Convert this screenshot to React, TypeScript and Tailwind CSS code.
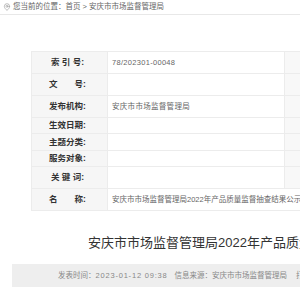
import { MapPin } from 'lucide-react';

const rows: Array<{ label: string; value: string; h: string; span?: boolean }> = [
  { label: '索 引 号:', value: '78/202301-00048', h: 'h-[22px]' },
  { label: '文　　号:', value: '', h: 'h-[22px]' },
  { label: '发布机构:', value: '安庆市市场监督管理局', h: 'h-[22px]' },
  { label: '生效日期:', value: '', h: 'h-[16px]' },
  { label: '主题分类:', value: '', h: 'h-[17px]' },
  { label: '服务对象:', value: '', h: 'h-[16px]' },
  { label: '关 键 词:', value: '', h: 'h-[22px]' },
  { label: '名　　称:', value: '安庆市市场监督管理局2022年产品质量监督抽查结果公示', h: 'h-[22px]', span: true },
];

export default function App() {
  return (
    <div className="relative h-[300px] w-[300px] overflow-hidden bg-white font-['Liberation_Sans','Noto_Sans_CJK_SC',sans-serif]">
      <div className="flex h-[15px] items-center gap-[2px] border-b border-[#e8e8e8] pl-[3px] text-[7.5px] text-[#666]">
        <MapPin className="h-[8px] w-[8px] text-[#888]" strokeWidth={1.6} />
        <span className="whitespace-nowrap">您当前的位置：首页 &gt; 安庆市市场监督管理局</span>
      </div>

      <div className="ml-[31px] mt-[36px] w-[300px] border-b border-[#ececec]">
        {rows.map((row) => (
          <div key={row.label} className={`flex border-t border-[#ececec] ${row.h}`}>
            <div className="flex w-[77px] shrink-0 items-center justify-center border-r border-l border-[#ececec] bg-[#f6f6f6] pr-[4px] text-[8.5px] font-bold whitespace-pre text-[#333]">
              {row.label}
            </div>
            {row.span ? (
              <div className="flex flex-1 items-center whitespace-nowrap pl-[4px] text-[7.5px] text-[#666]">{row.value}</div>
            ) : (
              <>
                <div className="flex w-[177px] shrink-0 items-center border-r border-[#ececec] pl-[4px] text-[7.5px] tracking-[0.3px] whitespace-nowrap text-[#666]">
                  {row.value}
                </div>
                <div className="flex-1 bg-[#f8f8f8]" />
              </>
            )}
          </div>
        ))}
      </div>

      <div className="mt-[22px] whitespace-nowrap pl-[88px] text-[13px] leading-[20px] text-[#333]">
        安庆市市场监督管理局2022年产品质量监督抽查结果公示
      </div>

      <div className="ml-[12px] mt-[11px] flex h-[23px] w-[400px] items-center whitespace-nowrap bg-[#eeeeee] pl-[46px] text-[7.5px] text-[#888]">
        <span>发表时间：</span>
        <span className="tracking-[0.8px]">2023-01-12 09:38</span>
        <span className="ml-[7px]">信息来源：安庆市市场监督管理局</span>
        <span className="ml-[9px]">打印</span>
      </div>
    </div>
  );
}
